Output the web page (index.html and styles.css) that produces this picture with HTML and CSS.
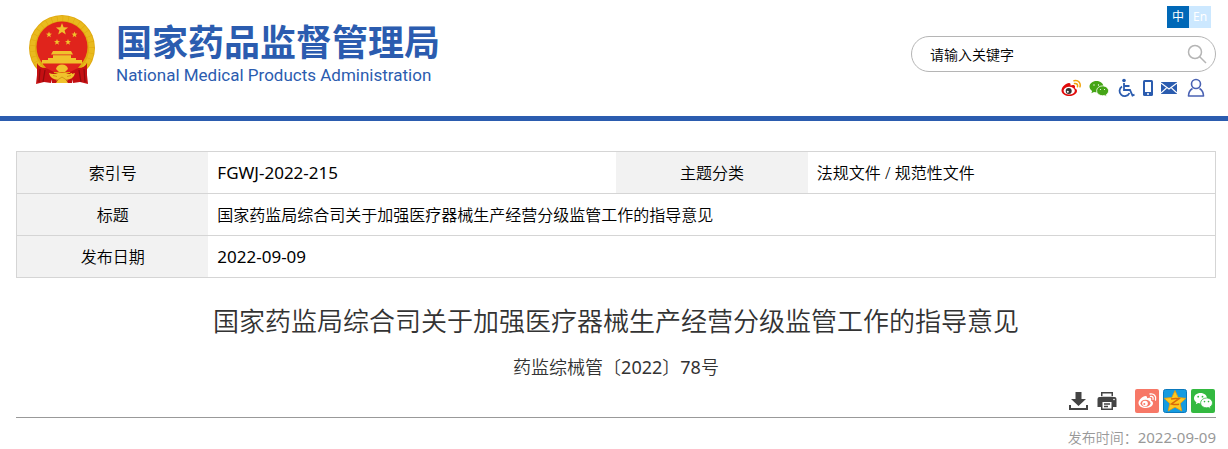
FILE: index.html
```html
<!DOCTYPE html>
<html lang="zh-CN">

<head>
  <meta charset="UTF-8">
  <meta name="viewport" content="width=device-width, initial-scale=1.0">
  <title>国家药品监督管理局</title>
  <link rel="stylesheet" href="styles.css">
</head>

<body>
  <header class="header">
    <a href="#" class="logo">
      <svg class="emblem" viewBox="0 0 68 72" aria-hidden="true">
        <circle cx="34" cy="34" r="33" fill="#e0a90f" />
        <circle cx="34" cy="34" r="29.500" fill="none" stroke="#e9ba1e" stroke-width="5" stroke-dasharray="5 .6" />
        <circle cx="34" cy="33" r="25.500" fill="#e0241c" />
        <g fill="#f0c22c">
          <path d="M34 9l1.600 4.200 4.500.2-3.500 2.800 1.200 4.400-3.800-2.500-3.800 2.500 1.200-4.400-3.500-2.800 4.500-.2z" />
          <path d="M21 17.500l.8 2.100 2.200.1-1.800 1.400.7 2.200-1.900-1.300-1.900 1.300.7-2.200-1.800-1.400 2.200-.1z" />
          <path d="M46.500 17.500l.8 2.100 2.200.1-1.800 1.400.7 2.200-1.900-1.300-1.900 1.300.7-2.200-1.800-1.400 2.200-.1z" />
          <path d="M29 25l.8 2.100 2.200.1-1.800 1.400.7 2.200-1.900-1.300-1.900 1.300.7-2.200-1.800-1.400 2.200-.1z" />
          <path d="M40 25l.8 2.100 2.200.1-1.800 1.400.7 2.200-1.900-1.300-1.900 1.300.7-2.200-1.800-1.400 2.200-.1z" />
          <path d="M25 37h18l2 3.500H23zM25 41.200h18V44h5v2h6v3.500H14V46h6v-2h5z" />
        </g>
        <path fill="#e0241c" d="M15 50h38l-6 8H21z" />
        <path fill="#c40f12" d="M9 49q2 5 9 5l8 4-3 11-7-1-8 2 1-9zM59 49q-2 5-9 5l-8 4 3 11 7-1 8 2-1-9zM24 59h20v10H24z" />
        <path d="M12 55l-1 13M17 56l-2 12M56 55l1 13M51 56l2 12" stroke="#8e0b0d" stroke-width="1.200" />
        <path fill="#f0c22c" d="M28 55q1-4.500 6-4.500t6 4.500l-3 3h-6zM21 59q5 2 9 0h8q4 2 9 0-1 6-9 7l2 3H28l2-3q-8-1-9-7z" />
        <path d="M28 67l6-4 6 4M25 61.500l4 1M43 61.500l-4 1" fill="none" stroke="#c98a10" stroke-width=".8" />
      </svg>
      <span class="logo-text">
        <span class="logo-cn">国家药品监督管理局</span>
        <span class="logo-en">National Medical Products Administration</span>
      </span>
    </a>

    <div class="tools">
      <div class="lang">
        <a href="#" class="on">中</a><a href="#">En</a>
      </div>
      <form class="search">
        <input type="text" class="keyword" aria-label="搜索" placeholder="请输入关键字">
        <button type="button" class="search-btn" aria-label="搜索">
          <svg width="20" height="20" viewBox="0 0 20 20" fill="none" stroke="#b5b5b5" stroke-width="1.500">
            <circle cx="8" cy="8" r="6.500" />
            <path d="M12.500 12.500L19 19" />
          </svg>
        </button>
      </form>
      <div class="links">
        <a href="#" aria-label="微博">
          <svg width="20" height="18" viewBox="0 0 20 18">
            <path fill="#e00b0b" d="M8 4C5 4 .5 8 .5 11.500.5 15 4.500 17 8.500 17c4.500 0 7.500-2.700 7.500-5 0-1.500-1-2.300-2.200-2.700.6-1.700.2-3-1-3.300-1-.2-2.200 0-3.300.5C9.800 5 9.500 4 8 4z" />
            <ellipse cx="8.200" cy="11.700" rx="5.600" ry="3.900" fill="#fff" />
            <circle cx="7.700" cy="12" r="3" fill="#333" />
            <circle cx="6.800" cy="12.700" r="1" fill="#fff" />
            <path d="M13.500 4.500c2.300-.4 3.500 1 3 3.200M13 1.800c4.500-1 7 2 6 6" fill="none" stroke="#f2a50c" stroke-width="1.500" stroke-linecap="round" />
          </svg>
        </a>
        <a href="#" aria-label="微信">
          <svg width="20" height="18" viewBox="0 0 20 18">
            <path fill="#45a516" d="M7.500 2C3.500 2 .5 4.500.5 7.600c0 1.900 1 3.400 2.600 4.400l-.7 2.200 2.600-1.300c.8.2 1.700.3 2.500.3 4 0 7-2.500 7-5.600S11.500 2 7.500 2z" />
            <path fill="#45a516" stroke="#fff" stroke-width=".8" d="M13.500 6.900c-3.300 0-5.900 2.200-5.900 4.900s2.600 4.900 5.900 4.900c.7 0 1.400-.1 2-.3l2.200 1.200-.5-1.900c1.500-.9 2.400-2.300 2.400-3.900 0-2.700-2.700-4.900-6.100-4.900z" />
            <g fill="#fff">
              <circle cx="5" cy="6" r=".7" /><circle cx="9.500" cy="6" r=".7" />
              <circle cx="11.500" cy="10.500" r=".6" /><circle cx="15.500" cy="10.500" r=".6" />
            </g>
          </svg>
        </a>
        <a href="#" aria-label="无障碍">
          <svg width="18" height="20" viewBox="0 0 18 20" fill="none" stroke="#2b5caf" stroke-width="1.800">
            <circle cx="7" cy="2.500" r="1.800" fill="#2b5caf" stroke="none" />
            <path d="M7 5v7h6l2.500 5.500 2-.8M7.500 8h5M5 8.500a5.200 5.200 0 1 0 7.500 6.500" />
          </svg>
        </a>
        <a href="#" aria-label="手机版">
          <svg width="10" height="16" viewBox="0 0 10 16">
            <rect width="10" height="16" rx="1.500" fill="#2b5caf" />
            <path fill="#fff" d="M2 2h6v10H2z" />
            <circle cx="5" cy="14" r="1" fill="#fff" />
          </svg>
        </a>
        <a href="#" aria-label="邮箱">
          <svg width="16" height="12" viewBox="0 0 16 12">
            <path fill="#2b5caf" d="M0 0h16v12H0z" />
            <path d="M0 1l8 6 8-6M0 11l5.500-5M16 11l-5.500-5" fill="none" stroke="#fff" stroke-width="1.100" />
          </svg>
        </a>
        <a href="#" class="user" aria-label="用户">
          <svg width="18" height="20" viewBox="0 0 18 20" fill="none" stroke="#4a62b3" stroke-width="1.600">
            <circle cx="9" cy="6" r="4.500" />
            <path d="M5.500 10.500Q1.500 13 1.500 18h15q0-5-4-7.500" stroke-linejoin="round" />
          </svg>
        </a>
      </div>
    </div>
  </header>

  <main class="main">
    <table class="info">
      <tr>
        <th scope="row">索引号</th>
        <td><span class="num">FGWJ-2022-215</span></td>
        <th scope="row">主题分类</th>
        <td>法规文件 / 规范性文件</td>
      </tr>
      <tr>
        <th scope="row">标题</th>
        <td colspan="3">国家药监局综合司关于加强医疗器械生产经营分级监管工作的指导意见</td>
      </tr>
      <tr>
        <th scope="row">发布日期</th>
        <td colspan="3"><span class="num">2022-09-09</span></td>
      </tr>
    </table>

    <h1 class="title">国家药监局综合司关于加强医疗器械生产经营分级监管工作的指导意见</h1>
    <p class="doc-no">药监综械管〔<span class="num">2022</span>〕<span class="num">78</span>号</p>

    <div class="share">
      <button type="button" aria-label="下载">
        <svg width="20" height="20" viewBox="0 0 20 20" fill="#444">
          <path d="M6.500 1h6v7h4.500l-7.500 7L2 8h4.500z" />
          <path d="M1 14v4h17v-4" fill="none" stroke="#444" stroke-width="2" />
        </svg>
      </button>
      <button type="button" class="print" aria-label="打印">
        <svg width="20" height="20" viewBox="0 0 20 20">
          <path fill="#444" d="M4 1h12v4H4zM2.500 6h15Q19.500 6 19.500 8v8H16v3H4v-3H.5V8q0-2 2-2z" />
          <path fill="#fff" d="M5.500 2.500h9V6h-9zM5.500 11h9v6.500h-9z" />
          <path d="M7 13h6M7 15.500h4M4 6.500h12" stroke="#444" stroke-width="1.300" />
          <circle cx="17" cy="8.500" r=".8" fill="#fff" />
        </svg>
      </button>
      <a href="#" aria-label="分享到微博">
        <svg width="24" height="24" viewBox="0 0 24 24">
          <rect width="24" height="24" rx="2" fill="#f77867" />
          <path fill="#fff" d="M10.500 7C7.500 7 3.500 11 3.500 14s3.500 5 7.500 5c4.500 0 7-2.500 7-4.700 0-1.400-1-2.200-2-2.500.5-1.500.2-2.700-1-3-1-.2-2 0-3 .5C12.300 8 12 7 10.500 7z" />
          <ellipse cx="10.500" cy="14.300" rx="5" ry="3.500" fill="#f77867" />
          <circle cx="10" cy="14.500" r="2.800" fill="#fff" />
          <circle cx="9.300" cy="15" r="1" fill="#f77867" />
          <path d="M15.500 7.500c2-.3 3 .8 2.500 2.800M15 5c4-.7 6.500 2 5.500 6" fill="none" stroke="#fff" stroke-width="1.300" stroke-linecap="round" />
        </svg>
      </a>
      <a href="#" aria-label="分享到QQ空间">
        <svg width="24" height="24" viewBox="0 0 24 24">
          <rect x=".5" y=".5" width="23" height="23" rx="2" fill="#149be0" stroke="#0b79bd" />
          <path fill="#fdc91f" stroke="#e89a0a" stroke-width=".8" stroke-linejoin="round" d="M12 1.500l3.200 7 7.600.8-5.600 5.200 1.600 7.500L12 18.200 5.200 22l1.600-7.500L1.200 9.300l7.600-.8z" />
          <path d="M8 10q4-.8 8-.3l-7.500 5.300q4 1 7.500.2" fill="none" stroke="#d96b08" stroke-width="1.500" />
        </svg>
      </a>
      <a href="#" aria-label="分享到微信">
        <svg width="24" height="24" viewBox="0 0 24 24">
          <rect width="24" height="24" rx="2" fill="#33b940" />
          <path fill="#fff" d="M9.500 4C5.800 4 3 6.300 3 9.200c0 1.700.9 3.100 2.400 4l-.6 2 2.300-1.100c.8.200 1.600.3 2.400.3 3.700 0 6.500-2.300 6.500-5.200S13.200 4 9.500 4z" />
          <path fill="#fff" stroke="#33b940" stroke-width=".8" d="M15.500 9c-3.300 0-5.900 2.200-5.900 4.900s2.600 4.900 5.900 4.900c.7 0 1.400-.1 2-.3l2.100 1.200-.5-1.900c1.500-.9 2.400-2.300 2.400-3.900C21.500 11.200 18.800 9 15.500 9z" />
          <g fill="#33b940">
            <circle cx="7.200" cy="7.700" r=".9" /><circle cx="11.500" cy="7.700" r=".9" />
            <circle cx="13.500" cy="12.600" r=".8" /><circle cx="17.500" cy="12.600" r=".8" />
          </g>
        </svg>
      </a>
    </div>

    <p class="pubtime">发布时间：<span class="num">2022-09-09</span></p>
  </main>
</body>

</html>
```
FILE: styles.css
```css
* {
  margin: 0;
  padding: 0;
  box-sizing: border-box;
}

body {
  font-family: "Noto Sans", "Noto Sans CJK SC", sans-serif;
  font-size: 16px;
  font-weight: 350;
  color: #000;
  background: #fff;
}

a {
  text-decoration: none;
}

svg {
  display: block;
}

button {
  border: none;
  background: none;
  cursor: pointer;
}

.num {
  font-weight: 400;
}

/* header */
.header {
  display: flex;
  justify-content: space-between;
  height: 121px;
  padding: 6px 12px 0 28px;
  border-bottom: 5px solid #2b5caf;
}

.logo {
  display: flex;
  align-items: flex-start;
  gap: 20px;
  padding-top: 8px;
  color: #2b5caf;
}

.emblem {
  width: 68px;
  height: 72px;
}

.logo-text {
  display: flex;
  flex-direction: column;
  padding-top: 6px;
}

.logo-cn {
  font-family: "Noto Sans CJK SC", sans-serif;
  font-size: 36px;
  font-weight: 700;
  line-height: 40px;
}

.logo-en {
  font-family: Roboto, sans-serif;
  font-size: 17px;
  font-weight: 400;
  line-height: 30px;
}

.tools {
  display: flex;
  flex-direction: column;
  align-items: flex-end;
}

.lang {
  display: flex;
  padding-right: 5px;
}

.lang a {
  width: 22px;
  height: 22px;
  font-size: 12px;
  font-weight: 400;
  line-height: 22px;
  text-align: center;
  color: #fff;
  background: #cce8ff;
}

.lang .on {
  background: #0068b7;
}

.search {
  display: flex;
  align-items: center;
  width: 305px;
  height: 36px;
  margin-top: 8px;
  padding: 0 8px 0 18px;
  border: 1px solid #b5b5b5;
  border-radius: 18px;
}

.keyword {
  flex: 1;
  min-width: 0;
  border: none;
  outline: none;
  font-family: inherit;
  font-size: 14px;
  font-weight: inherit;
  background: none;
}

.keyword::placeholder {
  color: #000;
}

.links {
  display: flex;
  align-items: center;
  gap: 8px;
  height: 20px;
  margin-top: 6px;
  padding-right: 11px;
}

.links .user {
  margin-left: 2px;
}

/* content */
.main {
  padding: 30px 12px 0 16px;
}

.info {
  width: 100%;
  table-layout: fixed;
  border-collapse: collapse;
  border: 1px solid #d5d5d5;
}

.info tr {
  border-bottom: 1px solid #d5d5d5;
}

.info th,
.info td {
  height: 42px;
  line-height: 24px;
}

.info th {
  width: 16%;
  font-weight: inherit;
  text-align: center;
  background: #f2f2f2;
}

.info td {
  padding-left: 9px;
}

.info .num {
  font-size: 17px;
}

.title {
  margin-top: 23px;
  font-size: 26px;
  font-weight: inherit;
  line-height: 40px;
  text-align: center;
  color: #333;
}

.doc-no {
  margin-top: 12px;
  font-size: 18px;
  line-height: 28px;
  text-align: center;
  color: #333;
}

.share {
  display: flex;
  align-items: center;
  justify-content: flex-end;
  gap: 4px;
  margin-top: 8px;
  padding: 0 1px 4px 0;
  border-bottom: 1px solid #999;
}

.share .print {
  margin: 0 14px 0 4px;
}

.pubtime {
  margin-top: 8px;
  font-size: 14px;
  line-height: 22px;
  text-align: right;
  color: #999;
}

.pubtime .num {
  font-size: 15px;
}
```
